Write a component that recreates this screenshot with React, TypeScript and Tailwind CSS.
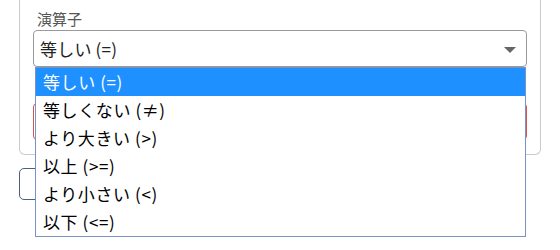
import React from "react";

const options = ["等しい (=)", "等しくない (≠)", "より大きい (>)", "以上 (>=)", "より小さい (<)", "以下 (<=)"];

export default function App() {
  return (
    <div
      className="relative w-[560px] h-[250px] overflow-hidden bg-white"
      style={{ fontFamily: '"Noto Sans CJK JP", "Noto Sans", sans-serif' }}
    >
      <div className="ml-[19px] w-[522px] border-x border-b border-[#c8ccd2] rounded-b-[6px] px-[13px] pt-[9px] pb-[14px]">
        <div className="text-[15px] leading-[20px] text-[#555] pl-[4px] mb-[1px]">演算子</div>
        <div className="relative h-[37px] border border-[#9a9a9a] rounded-[4px] flex items-center pl-[6px] text-[17px] tracking-[0.2px] text-[#222]">
          <span>等しい (=)</span>
          <svg className="absolute right-[10px] top-[16px]" width="12" height="6" viewBox="0 0 12 6">
            <polygon points="0,0 12,0 6,6" fill="#666" />
          </svg>
        </div>
        <div className="mt-[36px] h-[37px] border border-[#d9534f] rounded-[4px]" />
      </div>
      <div className="ml-[19px] mt-[13px] w-[160px] h-[32px] border border-[#4b5f7f] rounded-[5px]" />

      <div className="absolute left-[35px] top-[67px] w-[491px] border border-[#7b93c4] bg-white">
        {options.map((o, i) => (
          <div
            key={o}
            className={
              "h-[28px] flex items-center pl-[7px] text-[17px] tracking-[0.6px] " +
              (i === 0 ? "bg-[#1e90ff] text-white" : "text-black")
            }
          >
            {o}
          </div>
        ))}
      </div>
    </div>
  );
}
